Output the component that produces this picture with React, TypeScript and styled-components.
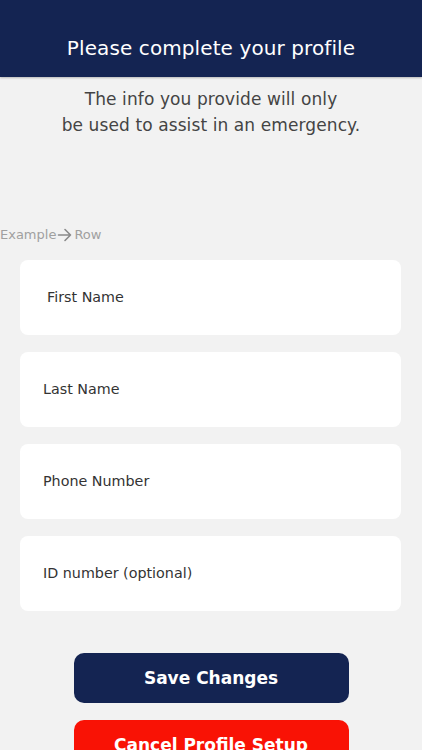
import React from "react";
import styled, { createGlobalStyle } from "styled-components";

const Global = createGlobalStyle`
  html, body { margin: 0; padding: 0; background: #f2f2f2; }
  body { font-family: "DejaVu Sans", "Noto Sans", sans-serif; }
  * { box-sizing: border-box; }
`;

const Page = styled.div`
  width: 422px;
  height: 750px;
  overflow: hidden;
  background: #f2f2f2;
  display: flex;
  flex-direction: column;
  & > * { flex-shrink: 0; }
`;

const Header = styled.header`
  height: 77px;
  background: #142452;
  display: flex;
  align-items: flex-end;
  justify-content: center;
  padding-bottom: 17px;
  box-shadow: 0 1px 2px rgba(0, 0, 0, 0.25);
`;

const Title = styled.h1`
  margin: 0;
  color: #ffffff;
  font-size: 20px;
  font-weight: 400;
  letter-spacing: 0.1px;
`;

const Subtitle = styled.p`
  margin: 9px 0 0;
  text-align: center;
  color: #444444;
  font-size: 17px;
  line-height: 26px;
  letter-spacing: 0.1px;
`;

const RowLabel = styled.div`
  margin-top: 89px;
  color: #a0a0a0;
  font-size: 13px;
  display: flex;
  align-items: center;
  gap: 1px;
`;

const Fields = styled.div`
  margin-top: 18px;
  padding: 0 21px 0 20px;
  display: flex;
  flex-direction: column;
  gap: 17px;
`;

const Field = styled.div<{ $indent?: number }>`
  height: 75px;
  background: #ffffff;
  border-radius: 8px;
  display: flex;
  align-items: center;
  padding-left: ${(p) => p.$indent ?? 23}px;
  padding-bottom: 2px;
  color: #333333;
  font-size: 14.3px;
`;

const Buttons = styled.div`
  margin-top: 42px;
  display: flex;
  flex-direction: column;
  align-items: center;
  gap: 17px;
`;

const Button = styled.button<{ $bg: string }>`
  width: 275px;
  height: 50px;
  border: none;
  border-radius: 10px;
  background: ${(p) => p.$bg};
  color: #ffffff;
  font-family: inherit;
  font-size: 17px;
  font-weight: 600;
  flex-shrink: 0;
`;

export default function App() {
  return (
    <Page>
      <Global />
      <Header>
        <Title>Please complete your profile</Title>
      </Header>
      <Subtitle>
        The info you provide will only
        <br />
        be used to assist in an emergency.
      </Subtitle>
      <RowLabel>
        Example
        <svg width="16" height="14" viewBox="0 0 16 14" fill="none" stroke="#8a8a8a" strokeWidth="1.6" strokeLinecap="round" strokeLinejoin="round">
          <path d="M1.5 7h12M8 1.5 13.5 7 8 12.5" />
        </svg>
        Row
      </RowLabel>
      <Fields>
        <Field $indent={27}>First Name</Field>
        <Field>Last Name</Field>
        <Field>Phone Number</Field>
        <Field>ID number (optional)</Field>
      </Fields>
      <Buttons>
        <Button $bg="#142452">Save Changes</Button>
        <Button $bg="#f91205">Cancel Profile Setup</Button>
      </Buttons>
    </Page>
  );
}
